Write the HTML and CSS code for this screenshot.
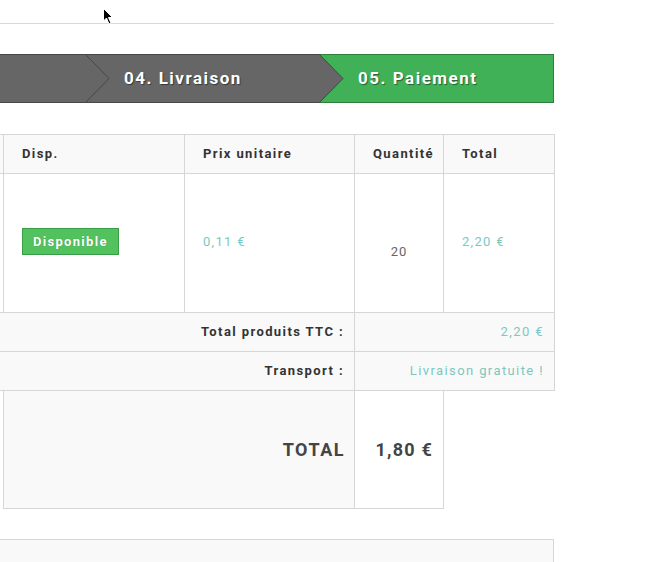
FILE: index.html
```html
<!DOCTYPE html>
<html lang="fr">
<head>
<meta charset="utf-8">
<title>Commande - Paiement</title>
<link rel="stylesheet" href="styles.css">
</head>
<body>
<div class="page">
  <div class="topline"></div>

  <div class="steps">
    <div class="step step-first">
      <span class="label"></span>
      <svg class="chev" width="25" height="49" viewBox="0 0 25 49"><polygon points="0,0 24,24.5 0,49" fill="#666"/><polyline points="0,0 24,24.5 0,49" fill="none" stroke="#474747" stroke-width="1"/></svg>
    </div>
    <div class="step step-mid">
      <span class="label">04. Livraison</span>
      <svg class="chev" width="25" height="49" viewBox="0 0 25 49"><polygon points="0,0 24,24.5 0,49" fill="#666"/><polyline points="0,0 24,24.5 0,49" fill="none" stroke="#474747" stroke-width="1"/></svg>
    </div>
    <div class="step step-current">
      <span class="label">05. Paiement</span>
    </div>
  </div>

  <table class="cart">
    <colgroup>
      <col class="c-prod"><col class="c-disp"><col class="c-price"><col class="c-qty"><col class="c-total">
    </colgroup>
    <thead>
      <tr>
        <th></th>
        <th>Disp.</th>
        <th>Prix unitaire</th>
        <th>Quantité</th>
        <th>Total</th>
      </tr>
    </thead>
    <tbody>
      <tr class="item">
        <td></td>
        <td><span class="badge">Disponible</span></td>
        <td class="money">0,11 €</td>
        <td class="qty">20</td>
        <td class="money">2,20 €</td>
      </tr>
    </tbody>
    <tfoot>
      <tr class="sub">
        <td colspan="3" class="lbl">Total produits TTC :</td>
        <td colspan="2" class="val">2,20 €</td>
      </tr>
      <tr class="sub">
        <td colspan="3" class="lbl">Transport :</td>
        <td colspan="2" class="val">Livraison gratuite !</td>
      </tr>
      <tr class="grand">
        <td class="blank"></td>
        <td colspan="2" class="lbl-big">TOTAL</td>
        <td class="val-big">1,80 €</td>
      </tr>
    </tfoot>
  </table>

  <div class="nextbox"></div>
</div>

<svg class="cursor" width="12" height="18" viewBox="0 0 12 18"><path d="M0.5 0.5 L0.5 13 L3.5 10 L6 16 L8 15 L5.5 9.5 L9.5 9.5 Z" fill="#000" stroke="#fff" stroke-width="1"/></svg>
</body>
</html>
```

FILE: styles.css
```css
html, body {
  margin: 0;
  padding: 0;
  background: #fff;
}
body {
  font-family: Roboto, "Liberation Sans", Arial, sans-serif;
  color: #333;
  overflow: hidden;
  width: 668px;
  height: 562px;
  position: relative;
}
.page {
  margin-left: -100px;
  width: 654px;
  padding-top: 23px;
}
.topline {
  height: 1px;
  background: #d8d8d8;
}
.steps {
  margin-top: 30px;
  display: flex;
  height: 49px;
}
.step {
  position: relative;
  display: flex;
  align-items: center;
  box-sizing: border-box;
  border-top: 1px solid #474747;
  border-bottom: 1px solid #474747;
  background: #666;
  padding-left: 38px;
  padding-bottom: 2px;
}
.step-first { width: 186px; z-index: 3; }
.step-mid { width: 234px; z-index: 2; }
.step-current {
  flex: 1;
  background: #41b157;
  border-color: #2f7f3c;
  border-right: 1px solid #2f7f3c;
}
.label {
  color: #fff;
  font-weight: 700;
  font-size: 17px;
  letter-spacing: 1.5px;
  text-shadow: 1px 1px 1px rgba(0,0,0,0.45);
}
.chev {
  position: absolute;
  right: -24px;
  top: -1px;
  display: block;
}

.cart {
  margin-top: 31px;
  border-collapse: collapse;
  table-layout: fixed;
  width: 654px;
  font-size: 13px;
}
.c-prod { width: 103px; }
.c-disp { width: 181px; }
.c-price { width: 170px; }
.c-qty { width: 89px; }
.c-total { width: 111px; }

.cart th, .cart td {
  border: 1px solid #d6d6d6;
  padding: 0 10px 0 18px;
}
.cart th {
  background: #f9f9f9;
  height: 36px;
  padding-bottom: 2px;
  text-align: left;
  font-weight: 700;
  letter-spacing: 1.4px;
  color: #333;
}
.item td {
  height: 135px;
  padding-bottom: 3px;
  vertical-align: middle;
}
.badge {
  display: inline-block;
  background: #51c25d;
  border: 1px solid #3a9c46;
  color: #fff;
  font-weight: 700;
  font-size: 13px;
  letter-spacing: 1.3px;
  padding: 0 10px;
  line-height: 25px;
  text-shadow: 0 0 1px rgba(0,0,0,0.25);
}
.money {
  color: #7cc8c0;
  letter-spacing: 1.3px;
}
.cart .qty {
  color: #666;
  letter-spacing: 1px;
  text-align: center;
  padding: 16px 0 0 0;
  height: 122px;
}
.sub td {
  background: #f9f9f9;
  height: 36px;
  padding-bottom: 2px;
}
.lbl {
  text-align: right;
  font-weight: 700;
  letter-spacing: 1.4px;
  color: #333;
}
.val {
  text-align: right;
  color: #7cc8c0;
  letter-spacing: 1.4px;
}
.grand td {
  height: 116px;
  padding-bottom: 1px;
}
.grand .blank {
  background: #fff;
  border-bottom: none;
}
.cart .lbl-big {
  background: #f9f9f9;
  text-align: right;
  font-size: 18px;
  font-weight: 700;
  letter-spacing: 1.5px;
  color: #444;
  padding-right: 9px;
}
.val-big {
  background: #fff;
  text-align: right;
  font-size: 18px;
  font-weight: 700;
  letter-spacing: 1.2px;
  color: #444;
}
.nextbox {
  margin-top: 30px;
  height: 40px;
  background: #f9f9f9;
  border: 1px solid #d6d6d6;
  box-sizing: border-box;
}
.cursor {
  position: absolute;
  left: 103px;
  top: 8px;
}
```
